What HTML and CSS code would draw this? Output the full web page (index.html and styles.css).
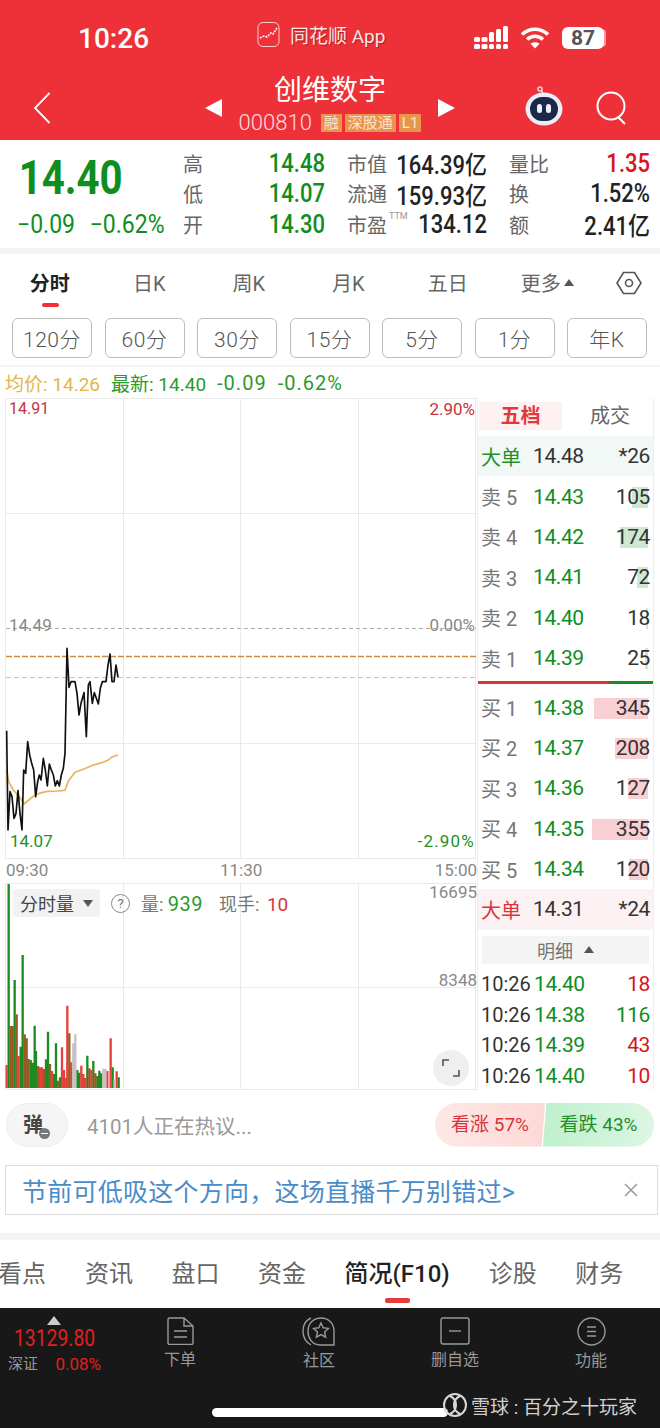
FILE: index.html
```html
<!DOCTYPE html>
<html lang="zh-CN">
<head>
    <meta charset="UTF-8">
    <meta name="viewport" content="width=device-width, initial-scale=1.0">
    <title>创维数字</title>
    <link rel="stylesheet" href="styles.css">
</head>
<body>
    <div class="page">
        <header class="top">
            <div class="status">
                <span class="status-time">10:26</span>
                <span class="status-app">
                    <svg class="app-icon" width="23" height="28" viewBox="0 0 23 28"><rect x="1" y="2.500" width="21" height="24" rx="5" fill="#ee3139" stroke="#fbd0d0" stroke-width="1"/><path d="M3 18l4-2 3 1 4-4 2 1 4-6" fill="none" stroke="#fff" stroke-width="1.600" stroke-dasharray="2 1"/></svg>
                    同花顺 App
                </span>
                <span class="status-icons">
                    <svg class="signal" width="35" height="24" viewBox="0 0 35 24" fill="#fff"><rect x="0" y="11" width="6" height="5" rx="1.500"/><rect x="0" y="18" width="6" height="5" rx="1.500"/><rect x="7.500" y="11" width="6" height="5" rx="1.500"/><rect x="7.500" y="18" width="6" height="5" rx="1.500"/><rect x="15" y="6" width="5" height="10" rx="1.500"/><rect x="15" y="18" width="5" height="5" rx="1.500"/><rect x="22" y="3" width="5" height="13" rx="1.500"/><rect x="22" y="18" width="5" height="5" rx="1.500"/><rect x="29" y="0" width="5" height="16" rx="1.500"/><rect x="29" y="18" width="5" height="5" rx="1.500"/></svg>
                    <svg width="30" height="24" viewBox="0 0 30 24" fill="none" stroke="#fff" stroke-width="3.600"><path d="M2 8.500C9.500 1.500 20.500 1.500 28 8.500"/><path d="M7 13.500c4.800-4.300 11.200-4.300 16 0"/><path d="M15 22.500l-4.500-4.700c2.700-2 6.300-2 9 0z" fill="#fff" stroke="none"/></svg>
                    <span class="battery"><b>87</b></span>
                </span>
            </div>
            <div class="nav">
                <svg class="nav-back" width="18" height="32" viewBox="0 0 18 32"><path d="M16.500 1L2 16l14.500 15" fill="none" stroke="#fff" stroke-width="1.800"/></svg>
                <span class="tri tri-left"></span>
                <div class="nav-title">
                    <div class="stock-name">创维数字</div>
                    <div class="stock-code">000810<span class="tag">融</span><span class="tag">深股通</span><span class="tag">L1</span></div>
                </div>
                <span class="tri tri-right"></span>
                <svg class="robot" width="38" height="42" viewBox="0 0 38 42"><circle cx="15" cy="5" r="2" fill="none" stroke="#f6d5d8" stroke-width="1.500"/><path d="M16 6l3 5" stroke="#f6d5d8" stroke-width="1.500"/><ellipse cx="19" cy="25" rx="18.500" ry="16.500" fill="#e9eefb"/><rect x="5" y="13" width="28" height="24" rx="12" fill="#1d2747"/><rect x="12" y="20" width="5" height="9" rx="2.500" fill="#e8f2ff"/><rect x="21" y="20" width="5" height="9" rx="2.500" fill="#e8f2ff"/></svg>
                <svg class="search" width="32" height="34" viewBox="0 0 32 34" fill="none" stroke="#fff" stroke-width="2"><circle cx="16" cy="15" r="13.500"/><path d="M23 26l7 7"/></svg>
            </div>
        </header>

        <section class="quote">
            <div class="quote-main">
                <div class="price">14.40</div>
                <div class="change"><span>−0.09</span><span>−0.62%</span></div>
            </div>
            <div class="stats">
                <span class="lbl">高</span><span class="val up">14.48</span>
                <span class="lbl">市值</span><span class="val">164.39亿</span>
                <span class="lbl">量比</span><span class="val red">1.35</span>
                <span class="lbl">低</span><span class="val up">14.07</span>
                <span class="lbl">流通</span><span class="val">159.93亿</span>
                <span class="lbl">换</span><span class="val">1.52%</span>
                <span class="lbl">开</span><span class="val up">14.30</span>
                <span class="lbl">市盈<sup>TTM</sup></span><span class="val">134.12</span>
                <span class="lbl">额</span><span class="val">2.41亿</span>
            </div>
        </section>

        <div class="strip"></div>

        <nav class="periods">
            <span class="period active">分时</span>
            <span class="period">日K</span>
            <span class="period">周K</span>
            <span class="period">月K</span>
            <span class="period">五日</span>
            <span class="period">更多<i class="more-tri"></i></span>
            <span class="period">
                <svg width="26" height="26" viewBox="0 0 26 26" fill="none" stroke="#555" stroke-width="1.600"><path d="M7.500 2.500h11L25 13l-6.500 10.500h-11L1 13z"/><circle cx="13" cy="13" r="3.500"/></svg>
            </span>
        </nav>

        <div class="kbtns">
            <span class="kbtn">120分</span>
            <span class="kbtn">60分</span>
            <span class="kbtn">30分</span>
            <span class="kbtn">15分</span>
            <span class="kbtn">5分</span>
            <span class="kbtn">1分</span>
            <span class="kbtn">年K</span>
        </div>

        <div class="legend">
            <span class="avg">均价: 14.26</span>
            <span>最新: 14.40</span>
            <span class="legend-num">-0.09</span>
            <span class="legend-num">-0.62%</span>
        </div>

        <section class="board">
            <div class="chart">
                <svg class="chart-svg" width="476" height="692" viewBox="0 398 476 692">
                    <g fill="none" stroke="#e9e9e9" stroke-width="1">
                        <path d="M5.500 398.500H476M5.500 398.500V858M5.500 858.500H476M475.500 398.500V858"/>
                        <path d="M123.500 398V858M240.500 398V858M358.500 398V858"/>
                        <path d="M5 513.500H476M5 743.500H476"/>
                        <path d="M5 883.500H476M5 1089.500H476M5.500 883V1090M123.500 883V1090M240.500 883V1090M358.500 883V1090M475.500 883V1090M5 987.500H476"/>
                    </g>
                    <path d="M6 628.500H476" stroke="#aaa" stroke-width="1" stroke-dasharray="4 3"/>
                    <path d="M6 677.500H476" stroke="#c9c5bd" stroke-width="1" stroke-dasharray="5 3"/>
                    <path d="M6 656.500H476" stroke="#c98b3c" stroke-width="1.500" stroke-dasharray="6 2"/>
                    <g transform="translate(0 600) scale(.33333)" fill="none" stroke-linejoin="round">
                        <polyline stroke="#e8b25e" stroke-width="5" points="20,510 26,545 40,570 62,595 72,612 90,597 108,583 125,578 143,574 170,573 195,571 205,543 225,517 250,508 280,495 305,488 325,480 335,471 354,465"/>
                        <polyline stroke="#111" stroke-width="5" points="20,392 24,690 30,575 36,590 42,655 48,640 54,572 60,640 66,690 71,510 77,520 83,425 89,465 95,490 101,510 107,590 113,545 118,525 123,540 130,475 136,510 142,558 148,492 154,510 160,525 166,558 172,542 178,558 184,525 190,505 195,460 201,145 207,262 213,245 225,245 231,280 237,345 243,310 252,278 259,410 265,255 270,245 277,310 283,278 289,295 295,312 301,265 307,245 318,245 324,195 330,162 336,245 342,245 348,195 354,232"/>
                    </g>
                    <g transform="translate(0 870) scale(.33333)" fill="none" stroke-width="7">
                        <path stroke="#1c8c22" d="M26 654V42M44 654V330M62 654V530M68 654V255M92 654V570M98 654V578M104 654V467M108 654V543M138 654V568M144 654V485M162 654V612M168 654V520M180 654V622M232 654V600M238 654V608M262 654V557M280 654V573M292 654V618M298 654V602M304 654V610M338 654V592M356 654V622"/>
                        <path stroke="#e8403c" d="M20 654V585M56 654V558M120 654V592M126 654V592M156 654V603M186 654V532M192 654V600M198 654V624M202 654V407M214 654V577M244 654V587M250 654V612M256 654V624M274 654V600M322 654V603M332 654V505M350 654V604"/>
                        <path stroke="#9a5a28" d="M32 654V468M38 654V468M50 654V433M74 654V493M80 654V505M86 654V567M114 654V588M132 654V597M150 654V582M174 654V632M208 654V490M268 654V595M286 654V610"/>
                        <path stroke="#c6c2c2" d="M220 654V520M226 654V493M310 654V596M316 654V596M344 654V628"/>
                    </g>
                </svg>
                <span class="tick red-t tick-tl">14.91</span>
                <span class="tick red-t tick-tr">2.90%</span>
                <span class="tick gray-t tick-ml">14.49</span>
                <span class="tick gray-t tick-mr">0.00%</span>
                <span class="tick green-t tick-bl">14.07</span>
                <span class="tick green-t tick-br">-2.90%</span>
                <span class="tick gray-t time-a">09:30</span>
                <span class="tick gray-t time-b">11:30</span>
                <span class="tick gray-t time-c">15:00</span>
                <span class="tick gray-t vol-a">16695</span>
                <span class="tick gray-t vol-b">8348</span>
                <div class="vol-head">
                    <span class="vol-select">分时量<i class="down-tri"></i></span>
                    <span class="help">?</span>
                    <span>量: <em class="vol-green">939</em></span>
                    <span class="vol-now">现手: <em class="vol-red">10</em></span>
                </div>
                <span class="expand">
                    <svg width="18" height="18" viewBox="0 0 18 18" fill="none" stroke="#555" stroke-width="1.600"><path d="M1 7V1h6M17 11v6h-6"/></svg>
                </span>
            </div>

            <div class="depth">
                <div class="depth-tabs"><span class="depth-tab on">五档</span><span class="depth-tab">成交</span></div>
                <div class="row big-sell"><span class="row-name sell-name">大单</span><span class="row-price dark">14.48</span><span class="row-vol">*26</span></div>
                <div class="row"><span class="row-name">卖 5</span><span class="row-price">14.43</span><span class="row-vol"><i class="bar bar-g" style="width:16px"></i>105</span></div>
                <div class="row"><span class="row-name">卖 4</span><span class="row-price">14.42</span><span class="row-vol"><i class="bar bar-g" style="width:28px"></i>174</span></div>
                <div class="row"><span class="row-name">卖 3</span><span class="row-price">14.41</span><span class="row-vol"><i class="bar bar-g" style="width:11px"></i>72</span></div>
                <div class="row"><span class="row-name">卖 2</span><span class="row-price">14.40</span><span class="row-vol"><i class="bar bar-g" style="width:2px"></i>18</span></div>
                <div class="row"><span class="row-name">卖 1</span><span class="row-price">14.39</span><span class="row-vol"><i class="bar bar-g" style="width:3px"></i>25</span></div>
                <div class="split"><i class="split-red"></i><i class="split-green"></i></div>
                <div class="row"><span class="row-name">买 1</span><span class="row-price">14.38</span><span class="row-vol"><i class="bar bar-r" style="width:54px"></i>345</span></div>
                <div class="row"><span class="row-name">买 2</span><span class="row-price">14.37</span><span class="row-vol"><i class="bar bar-r" style="width:33px"></i>208</span></div>
                <div class="row"><span class="row-name">买 3</span><span class="row-price">14.36</span><span class="row-vol"><i class="bar bar-r" style="width:20px"></i>127</span></div>
                <div class="row"><span class="row-name">买 4</span><span class="row-price">14.35</span><span class="row-vol"><i class="bar bar-r" style="width:56px"></i>355</span></div>
                <div class="row"><span class="row-name">买 5</span><span class="row-price">14.34</span><span class="row-vol"><i class="bar bar-r" style="width:19px"></i>120</span></div>
                <div class="row big-buy"><span class="row-name buy-name">大单</span><span class="row-price dark">14.31</span><span class="row-vol">*24</span></div>
                <div class="detail-head">明细<i class="more-tri detail-tri"></i></div>
                <div class="deal"><span class="deal-time">10:26</span><span class="row-price">14.40</span><span class="deal-vol red">18</span></div>
                <div class="deal"><span class="deal-time">10:26</span><span class="row-price">14.38</span><span class="deal-vol up">116</span></div>
                <div class="deal"><span class="deal-time">10:26</span><span class="row-price">14.39</span><span class="deal-vol red">43</span></div>
                <div class="deal"><span class="deal-time">10:26</span><span class="row-price">14.40</span><span class="deal-vol red">10</span></div>
            </div>
        </section>

        <section class="talk">
            <span class="danmu">弹<i class="danmu-off"></i></span>
            <span class="talk-text">4101人正在热议...</span>
            <span class="vote">
                <span class="vote-up">看涨 57%</span><span class="vote-down">看跌 43%</span>
            </span>
        </section>

        <div class="notice">
            <span>节前可低吸这个方向，这场直播千万别错过&gt;</span>
            <svg width="14" height="14" viewBox="0 0 14 14" stroke="#999" stroke-width="1.500"><path d="M1 1l12 12M13 1L1 13"/></svg>
        </div>

        <div class="strip strip-b"></div>

        <nav class="info-tabs">
            <span>看点</span>
            <span>资讯</span>
            <span>盘口</span>
            <span>资金</span>
            <span class="active">简况(F10)</span>
            <span>诊股</span>
            <span>财务</span>
        </nav>

        <footer class="foot">
            <div class="index">
                <i class="index-tri"></i>
                <div class="index-val">13129.80</div>
                <div class="index-line"><span>深证</span><b>0.08%</b></div>
            </div>
            <div class="foot-item">
                <svg width="27" height="28" viewBox="0 0 27 28" fill="none" stroke="#999" stroke-width="1.400"><path d="M2.500 1H17l9 8v17a1.500 1.500 0 0 1-1.500 1.500h-22A1.500 1.500 0 0 1 1 26V2.500A1.500 1.500 0 0 1 2.500 1zM17 1v8h9M7 14h13M7 20h13"/></svg>
                <span>下单</span>
            </div>
            <div class="foot-item">
                <svg width="34" height="29" viewBox="0 0 34 29" fill="none" stroke="#999" stroke-width="1.400"><path d="M9 28C3.500 25 1 20 1 14 1 8 4 3 9 1"/><path d="M32 28H18C10 28 6 21 6 14 6 6 12 1 19 1s13 5 13 13z"/><path d="M19 6l2.200 4.800 5.200.6-3.800 3.600 1 5.200-4.600-2.600-4.600 2.600 1-5.200-3.800-3.600 5.200-.6z"/></svg>
                <span>社区</span>
            </div>
            <div class="foot-item">
                <svg width="30" height="28" viewBox="0 0 30 28" fill="none" stroke="#999" stroke-width="1.400"><rect x="1" y="1" width="28" height="26" rx="2"/><path d="M9 14h12"/></svg>
                <span>删自选</span>
            </div>
            <div class="foot-item">
                <svg width="29" height="29" viewBox="0 0 29 29" fill="none" stroke="#999" stroke-width="1.400"><circle cx="14.500" cy="14.500" r="13.500"/><path d="M10 10h9M10 14.500h9M10 19h9"/></svg>
                <span>功能</span>
            </div>
        </footer>

        <div class="home-bar"></div>
        <div class="mark">
            <svg width="24" height="30" viewBox="0 0 24 30" fill="none" stroke="#d8d8d8" stroke-width="2"><circle cx="12" cy="15" r="11"/><path d="M7 6c8 4 8 14 0 18M17 6c-8 4-8 14 0 18"/></svg>
            <span>雪球 : 百分之十玩家</span>
        </div>
    </div>
</body>
</html>
```

FILE: styles.css
```css
* {
    box-sizing: border-box;
}

body {
    margin: 0;
    background-color: #ffffff;
    font-family: Roboto, 'Noto Sans CJK SC', sans-serif;
    color: #222;
}

i, em {
    font-style: normal;
}

.page {
    position: relative;
    width: 660px;
    height: 1428px;
    overflow: hidden;
}

/* top red header */
.top {
    height: 140px;
    background-color: #ee3139;
    color: #ffffff;
}

.status {
    display: flex;
    align-items: center;
    height: 70px;
    padding: 6px 56px 0 78px;
}

.status-time {
    width: 110px;
    font-size: 28px;
    font-weight: 500;
}

.status-app {
    display: flex;
    align-items: center;
    gap: 10px;
    margin-left: 69px;
    margin-top: -8px;
    font-size: 19px;
    color: #f8e6e6;
    text-shadow: 1px 1px 1px rgba(120, 0, 0, 0.5);
}

.status-icons {
    display: flex;
    align-items: center;
    gap: 6px;
    margin-left: auto;
}

.signal {
    margin-right: 5px;
}

.battery {
    display: block;
    width: 42px;
    height: 22px;
    border-radius: 6px;
    background-color: #ffffff;
    text-align: center;
    font-size: 21px;
    line-height: 22px;
    margin-left: 6px;
    box-shadow: 4px 0 0 -2px rgba(255, 255, 255, 0.5);
}

.battery b {
    font-weight: 700;
    color: #555;
}

.nav {
    position: relative;
    display: flex;
    align-items: center;
    height: 70px;
}

.nav-back {
    margin-left: 33px;
    margin-top: 5px;
}

.tri {
    width: 0;
    height: 0;
    border-top: 9px solid transparent;
    border-bottom: 9px solid transparent;
    margin-top: 5px;
}

.tri-left {
    margin-left: 154px;
    border-right: 17px solid #ffffff;
}

.tri-right {
    border-left: 17px solid #ffffff;
}

.nav-title {
    width: 216px;
    text-align: center;
}

.stock-name {
    font-size: 28px;
    line-height: 38px;
    margin-top: -3px;
}

.stock-code {
    display: flex;
    justify-content: center;
    align-items: center;
    gap: 3px;
    font-size: 22px;
    font-weight: 300;
    line-height: 26px;
    color: #fbdcdc;
    white-space: nowrap;
}

.tag {
    padding: 0 3px;
    background-color: #e8954c;
    color: #fbe3cf;
    font-size: 15px;
    font-weight: 400;
    line-height: 18px;
}

.tag:first-of-type {
    margin-left: 6px;
}

.robot {
    margin-left: 70px;
}

.search {
    margin-left: 32px;
    margin-top: 5px;
}

/* price block */
.quote {
    display: flex;
    height: 108px;
    padding-top: 8px;
}

.quote-main {
    width: 183px;
    padding-left: 17px;
    padding-top: 1px;
    color: #0e8e1e;
}

.price {
    font-size: 49px;
    font-weight: 700;
    line-height: 58px;
    padding-left: 2px;
    transform: scaleX(0.82);
    transform-origin: left center;
}

.change {
    display: flex;
    gap: 16px;
    font-size: 25px;
    line-height: 30px;
    margin-top: 3px;
    white-space: nowrap;
    transform: scaleX(0.92);
    transform-origin: left center;
}

.stats {
    display: grid;
    grid-template-columns: 44px 98px 54px 108px 55px 108px;
    grid-template-rows: repeat(3, 30.5px);
    align-items: center;
    white-space: nowrap;
}

.stats .lbl {
    font-size: 20px;
    color: #666;
}

.stats .lbl:nth-child(6n + 3),
.stats .lbl:nth-child(6n + 5) {
    padding-left: 22px;
}

.stats sup {
    margin-left: 2px;
    font-size: 9px;
    color: #999;
    vertical-align: 14px;
    line-height: 0;
}

.val {
    font-size: 25px;
    font-weight: 500;
    text-align: right;
    transform: scaleX(0.88);
    transform-origin: right center;
}

.up {
    color: #0e8e1e;
}

.red {
    color: #d9141c;
}

.strip {
    height: 6px;
    background-color: #f4f4f4;
}

/* period tabs */
.periods {
    display: flex;
    height: 60px;
}

.period {
    position: relative;
    display: flex;
    align-items: center;
    justify-content: center;
    width: 99.500px;
    height: 57px;
    font-size: 20px;
    color: #666;
}

.period:last-child {
    width: 62px;
    margin-left: 1px;
}

.period.active {
    color: #222;
    font-weight: 700;
}

.period.active::after {
    content: "";
    position: absolute;
    left: 42px;
    bottom: 4px;
    width: 17px;
    height: 4px;
    border-radius: 2px;
    background-color: #ee3139;
}

.more-tri {
    display: inline-block;
    width: 0;
    height: 0;
    margin-left: 3px;
    border-left: 5px solid transparent;
    border-right: 5px solid transparent;
    border-bottom: 7px solid #555;
}

.kbtns {
    display: flex;
    gap: 12.500px;
    height: 53px;
    padding: 4px 12px 0;
    border-bottom: 2px solid #f4f4f4;
}

.kbtn {
    display: flex;
    align-items: center;
    justify-content: center;
    width: 80px;
    height: 40px;
    border: 1px solid #bdbdbd;
    border-radius: 6px;
    font-size: 21px;
    font-weight: 300;
    color: #555;
    letter-spacing: 0.5px;
}

.legend {
    display: flex;
    gap: 11px;
    height: 31px;
    padding-left: 5px;
    align-items: center;
    font-size: 19px;
    color: #2c9a2c;
}

.legend-num {
    font-size: 20px;
    letter-spacing: 1px;
}

.avg {
    color: #e3b54f;
}

/* chart and order book */
.board {
    display: flex;
    height: 692px;
}

.chart {
    position: relative;
    width: 477px;
    flex-shrink: 0;
}

.chart-svg {
    display: block;
}

.tick {
    position: absolute;
    font-size: 17px;
    line-height: 20px;
    white-space: nowrap;
}

.red-t {
    color: #c8323c;
}

.green-t {
    color: #1f8f2a;
}

.gray-t {
    color: #888;
}

.tick-tl { left: 9px; top: 1px; font-size: 16px; }
.tick-tr { right: 2px; top: 1px; }
.tick-ml { left: 9px; top: 217px; }
.tick-mr { right: 2px; top: 217px; }
.tick-bl { left: 10px; top: 433px; }
.tick-br { right: 2px; top: 433px; letter-spacing: 1.200px; }
.time-a { left: 6px; top: 462px; }
.time-b { left: 220px; top: 462px; }
.time-c { right: 0; top: 462px; }
.vol-a { right: 0; top: 484px; }
.vol-b { right: 0; top: 572px; }

.vol-head {
    position: absolute;
    left: 13px;
    top: 491px;
    display: flex;
    align-items: center;
    gap: 11px;
    font-size: 18px;
    color: #777;
}

.vol-select {
    display: flex;
    align-items: center;
    width: 87px;
    height: 28px;
    padding: 0 6px 0 7px;
    border-radius: 3px;
    background-color: #f2f2f2;
    color: #444;
}

.down-tri {
    margin-left: 9px;
    border-left: 5.500px solid transparent;
    border-right: 5.500px solid transparent;
    border-top: 7px solid #555;
}

.help {
    width: 19px;
    height: 19px;
    border: 1px solid #888;
    border-radius: 50%;
    text-align: center;
    font-size: 13px;
    line-height: 17px;
}

.vol-green {
    color: #2c9a2c;
    font-size: 20px;
    letter-spacing: 0.5px;
}

.vol-red {
    margin-left: 3px;
    color: #d9343c;
    font-size: 19px;
}

.vol-now {
    margin-left: 5px;
}

.expand {
    position: absolute;
    left: 433px;
    top: 652px;
    display: flex;
    align-items: center;
    justify-content: center;
    width: 36px;
    height: 36px;
    border-radius: 50%;
    background-color: #efefef;
}

.depth {
    width: 177px;
    margin-right: 6px;
    border-left: 1px solid #eee;
    border-right: 1px solid #eee;
}

.depth-tabs {
    display: flex;
    height: 38px;
    padding: 4px 0 0 1px;
}

.depth-tab {
    width: 83px;
    height: 28px;
    font-size: 20px;
    line-height: 28px;
    text-align: center;
    color: #666;
}

.depth-tab + .depth-tab {
    margin-left: 18px;
    width: 60px;
}

.depth-tab.on {
    background-color: #fdf1f1;
    color: #e2383c;
    font-weight: 700;
}

.row, .deal {
    display: flex;
    align-items: center;
    height: 40.400px;
    padding: 0 3px 0 3px;
    font-size: 20px;
}

.row-name {
    width: 52px;
    color: #777;
    white-space: nowrap;
}

.row-price {
    width: 60px;
    color: #0e8e1e;
    font-size: 21px;
    letter-spacing: -0.400px;
}

.dark {
    color: #333;
}

.row-vol {
    position: relative;
    z-index: 0;
    flex: 1;
    text-align: right;
    color: #333;
    font-size: 21px;
    letter-spacing: -0.400px;
}

.bar {
    position: absolute;
    right: 2px;
    top: 2px;
    height: 21px;
    z-index: -1;
}

.bar-g {
    background-color: #cfe8d2;
}

.bar-r {
    background-color: #f8cfd2;
}

.big-sell {
    background-color: #f1f8f5;
}

.big-buy {
    background-color: #fdf2f3;
}

.sell-name {
    color: #1f8f2a;
}

.buy-name {
    color: #d9343c;
}

.split {
    display: flex;
    height: 9px;
    align-items: center;
}

.split i {
    display: block;
    height: 3px;
}

.split-red {
    width: 131px;
    background-color: #d6363c;
}

.split-green {
    flex: 1;
    background-color: #1c8c22;
}

.detail-head {
    display: flex;
    align-items: center;
    justify-content: center;
    height: 28px;
    margin: 6px 4px 5px;
    background-color: #f4f4f4;
    color: #777;
    font-size: 18px;
}

.detail-tri {
    margin-left: 11px;
}

.deal {
    height: 30.700px;
}

.deal-time {
    width: 53px;
    color: #333;
    font-size: 20px;
}

.deal-vol {
    flex: 1;
    text-align: right;
    font-size: 21px;
    letter-spacing: -0.400px;
}

/* discussion */
.talk {
    display: flex;
    align-items: center;
    height: 75px;
    padding: 0 6px 6px;
}

.danmu {
    position: relative;
    width: 62px;
    height: 44px;
    border: 1px solid #eee;
    border-radius: 22px;
    background-color: #f5f5f5;
    color: #444;
    font-size: 20px;
    font-weight: 700;
    line-height: 42px;
    padding-left: 16px;
}

.danmu-off {
    position: absolute;
    left: 32px;
    top: 24px;
    width: 11px;
    height: 11px;
    border-radius: 50%;
    background-color: #777;
}

.danmu-off::after {
    content: "";
    position: absolute;
    left: 2px;
    top: 5px;
    width: 7px;
    height: 1px;
    background-color: #ffffff;
}

.talk-text {
    margin-left: 19px;
    color: #999;
    font-size: 20.500px;
}

.vote {
    display: flex;
    margin-left: auto;
    height: 44px;
    font-size: 19px;
    line-height: 44px;
    text-align: center;
}

.vote-up {
    width: 110px;
    border-radius: 22px 0 0 22px;
    background: linear-gradient(90deg, #fde8e6, #fdd9d6);
    color: #d9343c;
    clip-path: polygon(0 0, 100% 0, 97% 100%, 0 100%);
}

.vote-down {
    width: 111px;
    margin-left: -2px;
    border-radius: 0 22px 22px 0;
    background: linear-gradient(90deg, #bff0cd, #dcf6e3);
    color: #1f8f2a;
    clip-path: polygon(3% 0, 100% 0, 100% 100%, 0 100%);
}

.notice {
    display: flex;
    align-items: center;
    justify-content: space-between;
    height: 50px;
    margin: 0 2px 0 5px;
    padding: 0 19px 0 16px;
    border: 1px solid #dddddd;
    color: #4a8cc8;
    font-size: 25px;
    letter-spacing: 0.25px;
}

.strip-b {
    height: 7px;
    margin-top: 18px;
}

.info-tabs {
    position: relative;
    display: flex;
    height: 68px;
    padding-top: 15px;
    font-size: 24px;
    color: #666;
    line-height: 38px;
    white-space: nowrap;
}

.info-tabs span {
    margin-right: 38.500px;
}

.info-tabs span:first-child {
    margin-left: -2px;
    margin-right: 39px;
}

.info-tabs .active {
    color: #222;
    font-weight: 500;
    margin-right: 39px;
}

.info-tabs .active::after {
    content: "";
    position: absolute;
    left: 385px;
    top: 58px;
    width: 25px;
    height: 5px;
    border-radius: 2px;
    background-color: #e53b3b;
}

/* bottom bar */
.foot {
    display: flex;
    height: 120px;
    background-color: #181818;
    color: #999;
}

.index {
    position: relative;
    width: 110px;
    padding: 8px 8px 0 8px;
}

.index-tri {
    display: block;
    width: 0;
    height: 0;
    margin-left: 39px;
    border-left: 7px solid transparent;
    border-right: 7px solid transparent;
    border-bottom: 9px solid #cccccc;
}

.index-val {
    margin: 3px 0 0 6px;
    font-size: 23px;
    line-height: 22px;
    color: #e01f1f;
    transform: scaleX(0.84);
    transform-origin: left center;
}

.index-line {
    display: flex;
    justify-content: space-between;
    width: 93px;
    margin-top: 2px;
    font-size: 15px;
    line-height: 24px;
}

.index-line b {
    font-size: 17px;
    font-weight: 400;
    color: #e01f1f;
}

.foot-item {
    display: flex;
    flex-direction: column;
    align-items: center;
    width: 60px;
    padding-top: 9px;
    font-size: 16px;
    line-height: 24px;
}

.foot-item span {
    margin-top: 3px;
}

.foot-item:nth-child(2) { margin-left: 40px; }
.foot-item:nth-child(3) { margin-left: 79px; }
.foot-item:nth-child(4) { margin-left: 76px; }
.foot-item:nth-child(5) { margin-left: 76px; }

.home-bar {
    position: absolute;
    left: 212px;
    top: 1408px;
    width: 236px;
    height: 9px;
    border-radius: 5px;
    background-color: #ffffff;
}

.mark {
    position: absolute;
    left: 443px;
    top: 1390px;
    display: flex;
    align-items: center;
    gap: 4px;
    color: #d0d0d0;
    font-size: 19px;
    white-space: nowrap;
}
```
